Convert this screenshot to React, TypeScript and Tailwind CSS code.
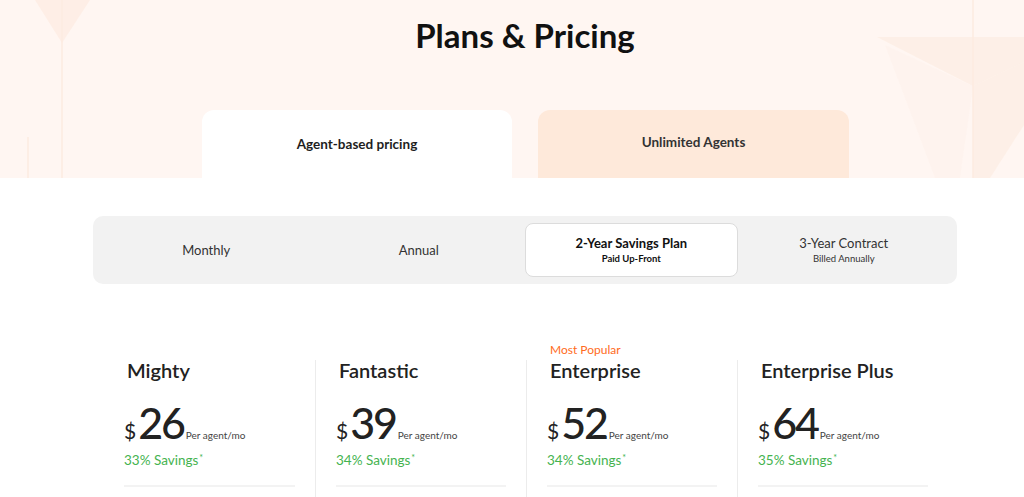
import React from "react";

type Plan = {
    name: string;
    price: number;
    savings: string;
    popular?: boolean;
};

const plans: Plan[] = [
    { name: "Mighty", price: 26, savings: "33% Savings" },
    { name: "Fantastic", price: 39, savings: "34% Savings" },
    { name: "Enterprise", price: 52, savings: "34% Savings", popular: true },
    { name: "Enterprise Plus", price: 64, savings: "35% Savings" },
];

const periods = [
    { label: "Monthly" },
    { label: "Annual" },
    { label: "2-Year Savings Plan", sub: "Paid Up-Front", active: true },
    { label: "3-Year Contract", sub: "Billed Annually" },
];

function HeaderShapes() {
    return (
        <svg className="absolute inset-0 h-full w-full pointer-events-none" viewBox="0 0 1024 178" preserveAspectRatio="none">
            <polygon points="35,0 90,0 62,43" fill="#fdebe1" opacity="0.7" />
            <line x1="62" y1="0" x2="62" y2="178" stroke="#fcebe1" strokeWidth="1.5" />
            <line x1="28" y1="137" x2="28" y2="178" stroke="#fcebe1" strokeWidth="1.5" />
            <polygon points="877,37 1024,37 1024,62 973,86" fill="#fdede4" opacity="0.8" />
            <polygon points="885,45 973,86 960,178 935,178" fill="#fef2ec" opacity="0.7" />
            <polygon points="973,86 1024,62 1024,125 990,178 973,178" fill="#fdede3" opacity="0.8" />
            <line x1="973" y1="0" x2="973" y2="178" stroke="#fcebe1" strokeWidth="1.5" />
        </svg>
    );
}

export default function App() {
    return (
        <div className="min-h-[497px] bg-white text-[#1e1e1e] overflow-hidden" style={{ fontFamily: "Lato, 'Open Sans', sans-serif" }}>
            {/* header */}
            <div className="relative h-[178px] bg-[#fff6f2]">
                <HeaderShapes />
                <div className="relative flex h-full flex-col">
                    <h1 className="pl-[26px] pt-[16px] text-center text-[33px] font-bold leading-[38px] text-[#111]">Plans &amp; Pricing</h1>
                    <div className="mt-[56px] flex flex-1 gap-[26px] pl-[202px]">
                        <div className="flex w-[310px] items-center justify-center rounded-t-[12px] bg-white text-[13.5px] font-bold text-[#1e1e1e]">
                            Agent-based pricing
                        </div>
                        <div className="flex w-[311px] items-center justify-center rounded-t-[12px] bg-[#fee9da] pb-[3px] text-[13.5px] font-bold text-[#333]">
                            Unlimited Agents
                        </div>
                    </div>
                </div>
            </div>

            {/* billing period */}
            <div className="ml-[93px] mt-[38px] grid h-[68px] w-[864px] grid-cols-4 rounded-[10px] bg-[#f2f2f2] p-[7px]">
                {periods.map((p) => (
                    <div
                        key={p.label}
                        className={
                            p.active
                                ? "flex flex-col items-center justify-center rounded-[8px] border border-[#dcdcdc] bg-white"
                                : "flex flex-col items-center justify-center"
                        }
                    >
                        <span className={p.active ? "text-[13px] font-bold leading-[16px] text-[#111]" : "text-[13px] leading-[16px] text-[#333]"}>
                            {p.label}
                        </span>
                        {p.sub && (
                            <span className={p.active ? "mt-[1px] text-[9.5px] font-bold leading-[13px] text-[#111]" : "mt-[1px] text-[9.5px] leading-[13px] text-[#333]"}>
                                {p.sub}
                            </span>
                        )}
                    </div>
                ))}
            </div>

            {/* plans */}
            <div className="ml-[104px] mt-[76px] grid w-[844px] grid-cols-4">
                {plans.map((plan, i) => (
                    <div key={plan.name} className={i === 0 ? "relative px-[20px] pb-4" : "relative border-l border-[#ececec] px-[20px] pb-4"}>
                        {plan.popular && (
                            <div className="absolute -top-[17px] left-[23px] text-[12px] leading-[14px] text-[#ff6b1c]">Most Popular</div>
                        )}
                        <h2 className="ml-[3px] text-[20px] font-semibold leading-[20px] text-[#222]">{plan.name}</h2>
                        <div className="mt-[21px] flex items-baseline">
                            <span className="text-[21px] leading-none text-[#222]">$</span>
                            <span className="ml-[2px] text-[43px] font-medium leading-none tracking-tighter text-[#222]">{plan.price}</span>
                            <span className="ml-[2px] text-[10px] leading-none text-[#444]">Per agent/mo</span>
                        </div>
                        <div className="mt-[7px] text-[13.5px] leading-[18px] text-[#45b34f]">
                            {plan.savings}
                            <sup className="ml-[1px] text-[9px]">*</sup>
                        </div>
                        <div className="mt-[16px] h-[2px] bg-[#f3f3f3]" />
                    </div>
                ))}
            </div>
        </div>
    );
}
